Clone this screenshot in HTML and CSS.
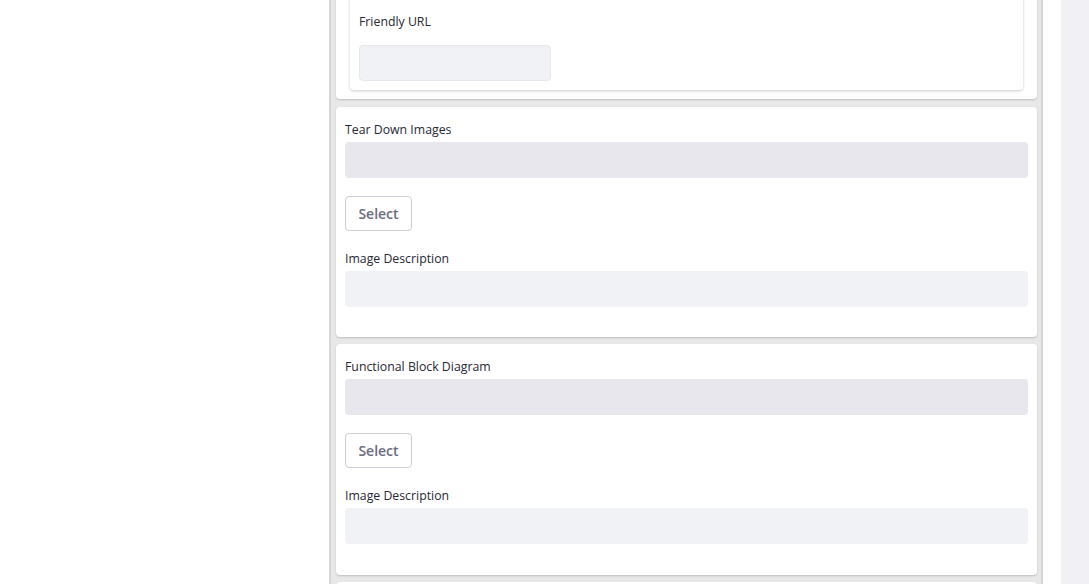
FILE: index.html
```html
<!DOCTYPE html>
<html>
<head>
<meta charset="utf-8">
<link rel="stylesheet" href="styles.css">
</head>
<body>
<div class="page">
  <div class="left-space"></div>
  <main class="column">
    <section class="card card-first">
      <div class="inner-card">
        <label class="label label-friendly">Friendly URL</label>
        <div class="input input-small"></div>
      </div>
    </section>
    <section class="card card-second">
      <label class="label">Tear Down Images</label>
      <div class="input input-readonly"></div>
      <button class="btn">Select</button>
      <label class="label label-desc">Image Description</label>
      <div class="input"></div>
    </section>
    <section class="card card-third">
      <label class="label">Functional Block Diagram</label>
      <div class="input input-readonly"></div>
      <button class="btn">Select</button>
      <label class="label label-desc">Image Description</label>
      <div class="input"></div>
    </section>
    <section class="card"></section>
  </main>
  <div class="gutter"></div>
  <aside class="side"></aside>
</div>
</body>
</html>
```

FILE: styles.css
```css
html, body {
  margin: 0;
  padding: 0;
  background: #ffffff;
  overflow: hidden;
}
body {
  font-family: "Open Sans", "Noto Sans", sans-serif;
  color: #272833;
}
.page {
  display: flex;
  height: 584px;
  overflow: hidden;
}
.left-space {
  width: 329px;
  flex: none;
}
.column {
  width: 701px;
  flex: none;
  background: #e8e8e8;
  border-left: 2px solid #d6d6d6;
  border-right: 2px solid #d6d6d6;
  padding: 0 4px 0 5px;
  display: flex;
  flex-direction: column;
  gap: 7px;
}
.gutter {
  width: 18px;
  flex: none;
}
.side {
  flex: 1;
  background: #f1f1f5;
}
.card {
  background: #ffffff;
  border-radius: 4px;
  box-shadow: 0 1px 2px rgba(0, 0, 0, 0.18);
  padding: 12px 9px 30px 9px;
  display: flex;
  flex-direction: column;
  flex: none;
}
.card-first {
  margin-top: -24px;
  padding: 14px 14px 9px 14px;
}
.card-second {
  margin-top: 1px;
}
.card-third {
  padding-bottom: 31px;
}
.inner-card {
  background: #ffffff;
  border-radius: 4px;
  box-shadow: 0 1px 3px rgba(0, 0, 0, 0.2);
  padding: 21px 9px 9px 9px;
  display: flex;
  flex-direction: column;
}
.label {
  font-size: 12.3px;
  line-height: 20px;
  padding-top: 1px;
  margin-bottom: 2px;
  display: block;
}
.label-friendly {
  margin-bottom: 13px;
}
.label-desc {
  margin-top: 17px;
}
.input {
  height: 36px;
  border-radius: 4px;
  background: #f1f2f5;
  box-sizing: border-box;
}
.input-readonly {
  background: #e7e7ed;
}
.input-small {
  width: 192px;
  border: 1px solid #e7e7ed;
}
.btn {
  align-self: flex-start;
  margin-top: 18px;
  height: 35px;
  width: 67px;
  padding: 0;
  border: 1px solid #cdced9;
  border-radius: 4px;
  background: #ffffff;
  color: #6b6c7e;
  font-family: "Open Sans", "Noto Sans", sans-serif;
  font-size: 14px;
  font-weight: 600;
}
```
